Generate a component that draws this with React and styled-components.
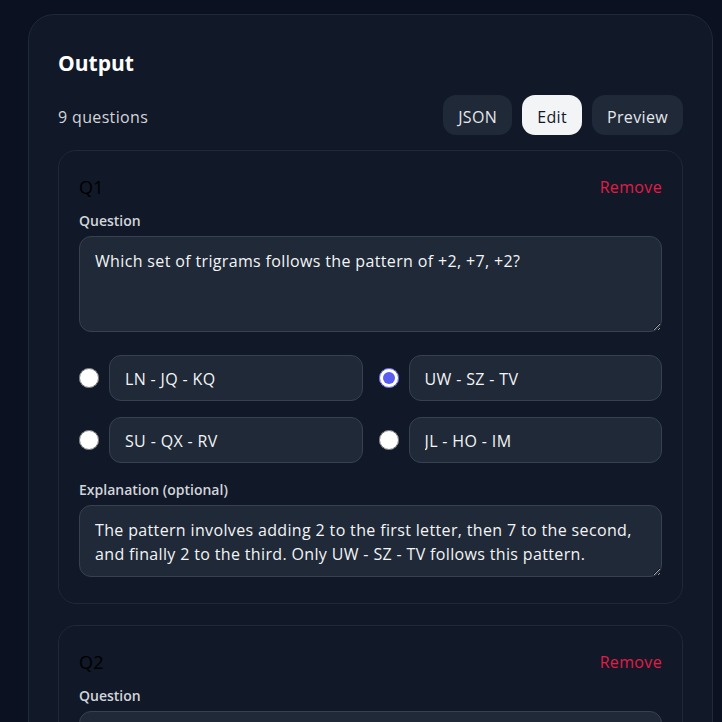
import React from 'react';
import styled, { createGlobalStyle } from 'styled-components';

const GlobalStyle = createGlobalStyle`
  html, body {
    margin: 0;
    padding: 0;
    background: #0b1120;
  }
  body {
    font-family: "Open Sans", "Noto Sans", sans-serif;
    letter-spacing: 0.35px;
    overflow: hidden;
  }
  * {
    box-sizing: border-box;
  }
`;

const Page = styled.div`
  min-height: 722px;
  padding: 14px 9px 0 28px;
  background: #0b1120;
`;

const Panel = styled.section`
  background: #111827;
  border: 1px solid #1f2937;
  border-radius: 26px;
  padding: 29px 29px 40px;
`;

const Title = styled.h2`
  margin: 5px 0 0;
  font-size: 21px;
  line-height: 28px;
  font-weight: 700;
  letter-spacing: 0;
  color: #ffffff;
`;

const Toolbar = styled.div`
  display: flex;
  align-items: center;
  justify-content: space-between;
  margin-top: 18px;
`;

const Count = styled.span`
  padding-top: 3px;
  font-size: 16px;
  color: #d1d5db;
`;

const Tabs = styled.div`
  display: flex;
  gap: 10px;
`;

const Tab = styled.button`
  height: 40px;
  padding: 3px 15px 0;
  border: none;
  border-radius: 13px;
  font-family: inherit;
  font-size: 16px;
  letter-spacing: inherit;
  background: ${p => (p.$active ? '#f3f4f6' : '#1f2937')};
  color: ${p => (p.$active ? '#111827' : '#e5e7eb')};
  cursor: pointer;
`;

const List = styled.div`
  display: flex;
  flex-direction: column;
  gap: 21px;
  margin-top: 15px;
`;

const Card = styled.div`
  border: 1px solid #1f2937;
  border-radius: 18px;
  background: #111827;
  padding: 20px 20px 26px;
`;

const CardHead = styled.div`
  display: flex;
  align-items: center;
  justify-content: space-between;
  height: 32px;
`;

const QNum = styled.span`
  font-size: 18px;
  font-weight: 500;
  color: #000000;
`;

const RemoveButton = styled.button`
  border: none;
  background: none;
  padding: 0;
  font-family: inherit;
  font-size: 16px;
  letter-spacing: inherit;
  color: #e11d48;
  cursor: pointer;
`;

const Label = styled.label`
  display: block;
  margin: ${p => p.$top || '8px'} 0 5px;
  font-size: 14px;
  line-height: 20px;
  font-weight: 600;
  letter-spacing: 0;
  color: #d1d5db;
`;

const Area = styled.textarea`
  display: block;
  width: 100%;
  height: ${p => p.$h}px;
  padding: 12px 15px 10px;
  border: 1px solid #374151;
  border-radius: 12px;
  background: #1f2937;
  color: #f3f4f6;
  font-family: inherit;
  font-size: 16px;
  letter-spacing: inherit;
  line-height: 24px;
  outline: none;
`;

const Options = styled.div`
  display: grid;
  grid-template-columns: 1fr 1fr;
  gap: 16px;
  margin-top: 23px;
`;

const Option = styled.div`
  display: flex;
  align-items: center;
  gap: 10px;
`;

const Radio = styled.input`
  width: 20px;
  height: 20px;
  margin: 0;
  flex: none;
  accent-color: #5b5cf0;
`;

const OptionInput = styled.input`
  flex: 1;
  min-width: 0;
  height: 46px;
  padding: 2px 15px 0;
  border: 1px solid #374151;
  border-radius: 12px;
  background: #1f2937;
  color: #f3f4f6;
  font-family: inherit;
  font-size: 16px;
  letter-spacing: inherit;
  outline: none;
`;

const questions = [
  {
    q: 'Which set of trigrams follows the pattern of +2, +7, +2?',
    options: ['LN - JQ - KQ', 'UW - SZ - TV', 'SU - QX - RV', 'JL - HO - IM'],
    answer: 1,
    explanation:
      'The pattern involves adding 2 to the first letter, then 7 to the second, and finally 2 to the third. Only UW - SZ - TV follows this pattern.',
  },
  {
    q: 'Which set of trigrams follows the pattern of -1, +3, -1?',
    options: ['BC - AF - ZE', 'MN - LQ - KP', 'DE - CH - BG', 'RS - QV - PU'],
    answer: 0,
    explanation: '',
  },
];

const QuestionCard = ({ item, index }) => (
  <Card>
    <CardHead>
      <QNum>Q{index + 1}</QNum>
      <RemoveButton>Remove</RemoveButton>
    </CardHead>
    <Label>Question</Label>
    <Area $h={96} defaultValue={item.q} />
    <Options>
      {item.options.map((opt, i) => (
        <Option key={i}>
          <Radio type="radio" name={`q${index}`} defaultChecked={i === item.answer} />
          <OptionInput defaultValue={opt} />
        </Option>
      ))}
    </Options>
    <Label $top="17px">Explanation (optional)</Label>
    <Area $h={72} defaultValue={item.explanation} />
  </Card>
);

export default function App() {
  return (
    <Page>
      <GlobalStyle />
      <Panel>
        <Title>Output</Title>
        <Toolbar>
          <Count>9 questions</Count>
          <Tabs>
            <Tab>JSON</Tab>
            <Tab $active>Edit</Tab>
            <Tab>Preview</Tab>
          </Tabs>
        </Toolbar>
        <List>
          {questions.map((item, i) => (
            <QuestionCard key={i} item={item} index={i} />
          ))}
        </List>
      </Panel>
    </Page>
  );
}
